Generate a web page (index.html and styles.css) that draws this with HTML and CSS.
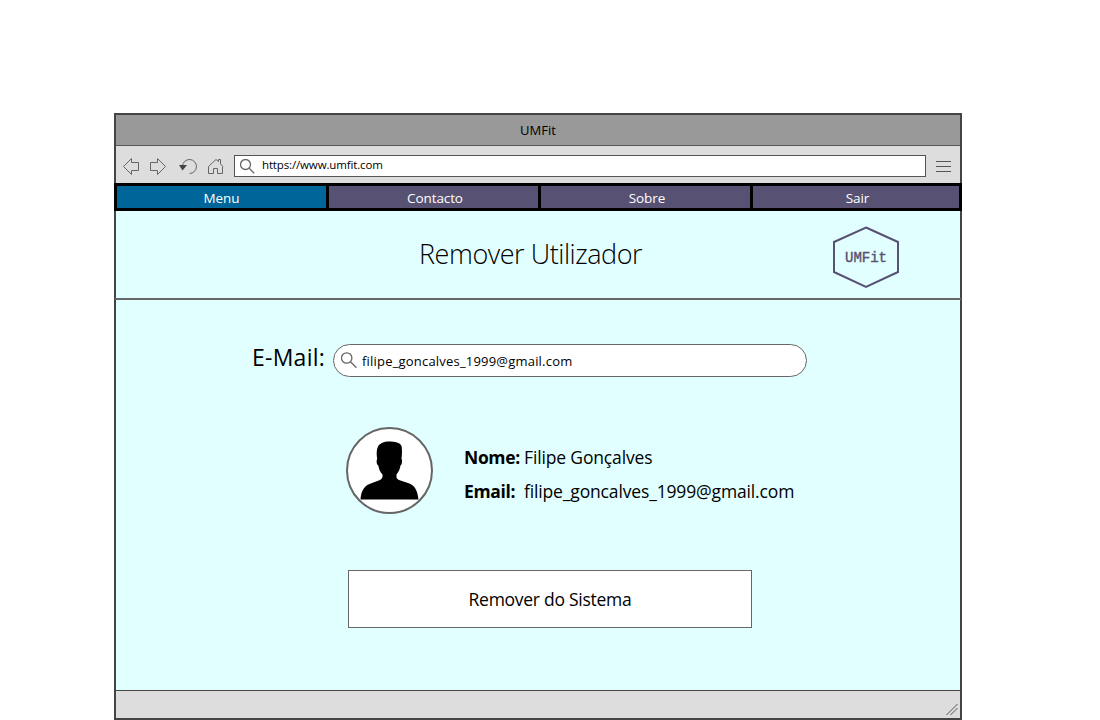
FILE: index.html
```
<!DOCTYPE html>
<html lang="pt">
<head>
<meta charset="utf-8">
<title>UMFit</title>
<link rel="stylesheet" href="styles.css">
</head>
<body>
<div class="window">
  <header class="titlebar"><span>UMFit</span></header>
  <div class="toolbar">
    <svg class="controls" width="110" height="30" viewBox="120 152 110 30">
      <path d="M123.5 166.5 131.5 158.500V162.500H138.500V170.500H131.500V174.500Z"/>
      <path d="M165.500 166.500 157.500 158.500V162.500H150.500V170.500H157.500V174.500Z"/>
      <path d="M182.500 166a7 7 0 1 1 7 7.500"/>
      <path class="solid" d="M179 165H187L182.500 170.500Z"/>
      <path d="M208.500 166.500 216 159.500 218.500 161.500V159.500H220.500V164L223 166.500M208.500 166.500V173.500H213.500V168.500H217.500V173.500H222.500V166.500"/>
    </svg>
    <div class="address">
      <svg width="16" height="16" viewBox="0 0 16 16"><circle cx="5.500" cy="5.500" r="5"/><path d="M9.200 9.200 14.200 14.200"/></svg>
      <span>https://www.umfit.com</span>
    </div>
    <svg class="burger" width="15" height="13" viewBox="0 0 15 13"><path d="M0 1.500H15M0 6.500H15M0 11.500H15"/></svg>
  </div>
  <nav class="menu">
    <a class="active"><span>Menu</span></a><a><span>Contacto</span></a><a><span>Sobre</span></a><a><span>Sair</span></a>
  </nav>
  <section class="heading">
    <h1>Remover Utilizador</h1>
    <svg class="logo" width="70" height="64" viewBox="0 0 70 64"><path d="M35 2.500 67 17V47L35 62 3 47V17Z"/><text x="14" y="37">UMFit</text></svg>
  </section>
  <main class="content">
    <div class="search-row">
      <label class="search-label">E-Mail:</label>
      <div class="search">
        <svg width="18" height="18" viewBox="0 0 18 18"><circle cx="5.700" cy="6" r="5.200"/><path d="M9.500 9.800 15.500 15.800"/></svg>
        <span>filipe_goncalves_1999@gmail.com</span>
      </div>
    </div>
    <div class="profile">
      <svg class="avatar" width="87" height="87" viewBox="0 0 87 87">
        <circle cx="43.500" cy="43.500" r="42.500"/>
        <path d="M14.500 72.500C15 63 19 58 26 56L34 53Q37 51.500 36.500 47.500C34 45 33 42 32.300 38.500Q30.300 37.500 30.700 33L31.200 32C30.500 28 30.300 23 32 19.500C34 16 38 14.500 43 14.500C49 14.500 54 15.500 55.500 19C56.300 22 56 28 55.500 32L56 33Q56.200 37.500 54.500 38.500C54 42 52.500 45 50.500 47.500Q50 52 53 53L62 56C69 58 71.500 64 72.500 72.500Z"/>
      </svg>
      <dl class="info">
        <dt>Nome:</dt><dd>Filipe Gonçalves</dd>
        <dt>Email:</dt><dd>filipe_goncalves_1999@gmail.com</dd>
      </dl>
    </div>
    <button class="remove"><span>Remover do Sistema</span></button>
  </main>
  <footer class="statusbar">
    <svg width="12" height="13" viewBox="0 0 12 13"><path d="M.5 12 11.500 1M4.500 12 11.500 5"/></svg>
  </footer>
</div>
</body>
</html>
```
FILE: styles.css
```
* { box-sizing: border-box; }
body {
  margin: 0;
  height: 720px;
  padding: 113px 0 0 114px;
  overflow: hidden;
  background: #fff;
  color: #000;
  font-family: "Open Sans", "Noto Sans", sans-serif;
  white-space: nowrap;
}
svg { display: block; flex: none; fill: none; stroke: #666; }
.window {
  display: flex;
  flex-direction: column;
  width: 848px;
  height: 607px;
  border: 2px solid #444;
  background: #e2ffff;
}
.titlebar {
  height: 31px;
  border-bottom: 1px solid #555;
  background: #999;
  text-align: center;
  font-size: 13px;
  line-height: 30px;
}
.toolbar {
  display: flex;
  align-items: flex-start;
  height: 37px;
  padding: 6px 9px 0 4px;
  background: #ddd;
}
.controls .solid { fill: #444; stroke: none; }
.address {
  display: flex;
  width: 692px;
  height: 22px;
  margin: 3px 10px 0 4px;
  padding: 3px 0 0 5px;
  border: 1px solid #555;
  background: #fff;
  font-size: 11.5px;
  letter-spacing: -0.14px;
  line-height: 12px;
}
.address svg, .search svg { stroke-width: 1.3; }
.address span { margin-left: 6px; }
.burger { margin-top: 8px; stroke: #555; }
.menu {
  display: grid;
  grid-template: 22px / 209px 209px 209px 206px;
  gap: 3px;
  height: 28px;
  margin: 0 -2px;
  padding: 3px;
  background: #000;
  color: #fff;
  font-size: 13.5px;
  letter-spacing: -0.1px;
  line-height: 24px;
  text-align: center;
}
.menu a { padding-left: 3px; background: #575273; }
.menu .active { padding-left: 0; background: #069; }
.heading {
  display: flex;
  height: 89px;
  margin: 0 -1px;
  padding: 14px 0 0 304px;
  border-bottom: 2px solid #666;
}
h1 {
  width: 224px;
  margin: 0 188px 0 0;
  font-size: 27px;
  font-weight: 300;
  letter-spacing: -0.45px;
  line-height: 58px;
}
.logo path { stroke: #575273; stroke-width: 2; }
.logo text {
  fill: #575273;
  stroke: #575273;
  stroke-width: 0.4;
  font: 14px "Liberation Mono", monospace;
}
.content { height: 390px; padding: 44px 0 0 136px; }
.search-row { display: flex; height: 33px; }
.search-label { width: 81px; font-size: 23px; letter-spacing: 0.25px; line-height: 26px; }
.search {
  display: flex;
  width: 474px;
  height: 33px;
  padding: 7px 0 0 7px;
  border: 1px solid #666;
  border-radius: 17px;
  background: #fff;
  font-size: 13px;
  letter-spacing: 0.2px;
  line-height: 18px;
}
.search span { margin-left: 3px; }
.profile { display: flex; margin: 50px 0 0 94px; }
.avatar circle { fill: #fff; stroke-width: 2; }
.avatar path { fill: #000; stroke: none; }
.info {
  display: grid;
  grid-template: 34px 34px / 60px auto;
  margin: 13px 0 0 31px;
  font-size: 17.5px;
  letter-spacing: -0.15px;
  line-height: 34px;
}
dt { font-weight: 700; letter-spacing: -0.35px; }
dd { margin: 0; }
.remove {
  display: block;
  width: 404px;
  height: 58px;
  margin: 56px 0 0 96px;
  padding: 0;
  border: 1px solid #666;
  background: #fff;
  color: #000;
  font: 17.5px "Open Sans", sans-serif;
  letter-spacing: -0.27px;
}
.statusbar {
  display: flex;
  justify-content: flex-end;
  align-items: flex-end;
  height: 28px;
  padding: 0 2px 2px 0;
  border-top: 1px solid #444;
  background: #ddd;
}
.statusbar svg { stroke: #555; }
```
